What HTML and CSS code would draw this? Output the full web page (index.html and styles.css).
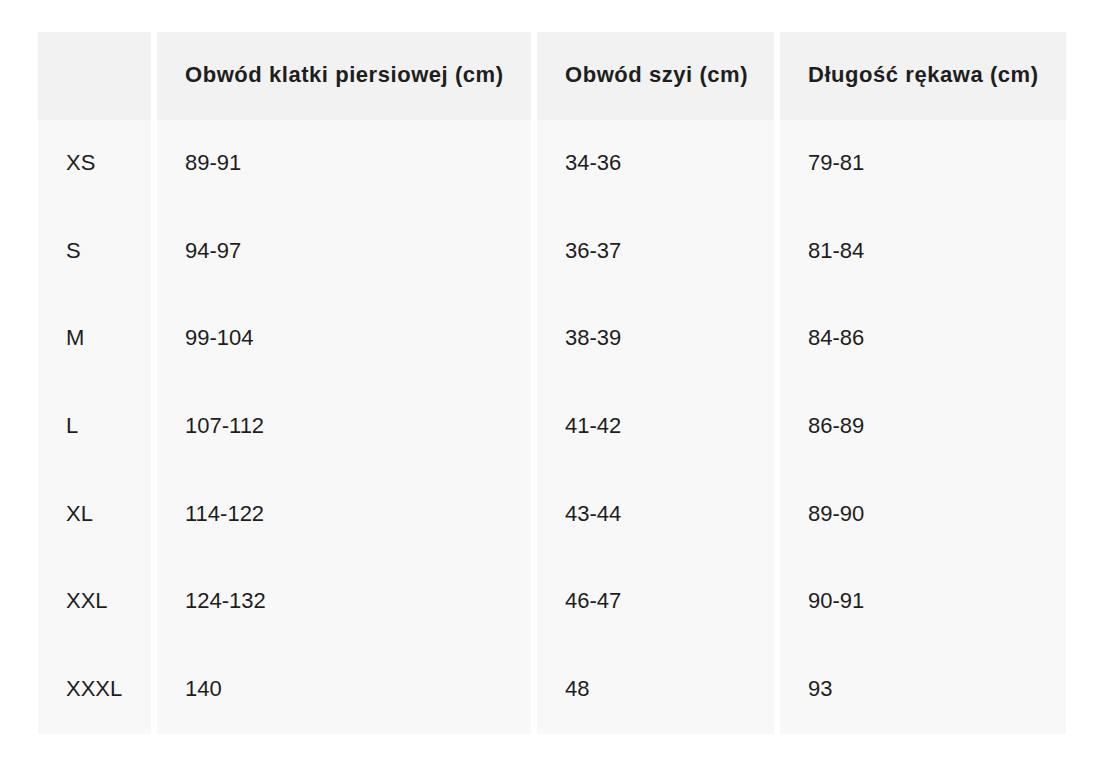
FILE: index.html
```html
<!DOCTYPE html>
<html lang="pl">
<head>
<meta charset="utf-8">
<title>Tabela rozmiarów</title>
<link rel="stylesheet" href="styles.css">
</head>
<body>
<div class="wrap">
<table class="sizes">
<colgroup>
<col class="c1"><col class="c2"><col class="c3"><col class="c4">
</colgroup>
<thead>
<tr><th></th><th>Obwód klatki piersiowej (cm)</th><th>Obwód szyi (cm)</th><th>Długość rękawa (cm)</th></tr>
</thead>
<tbody>
<tr><td>XS</td><td>89-91</td><td>34-36</td><td>79-81</td></tr>
<tr><td>S</td><td>94-97</td><td>36-37</td><td>81-84</td></tr>
<tr><td>M</td><td>99-104</td><td>38-39</td><td>84-86</td></tr>
<tr><td>L</td><td>107-112</td><td>41-42</td><td>86-89</td></tr>
<tr><td>XL</td><td>114-122</td><td>43-44</td><td>89-90</td></tr>
<tr><td>XXL</td><td>124-132</td><td>46-47</td><td>90-91</td></tr>
<tr><td>XXXL</td><td>140</td><td>48</td><td>93</td></tr>
</tbody>
</table>
</div>
</body>
</html>
```
FILE: styles.css
```css
html, body {
  margin: 0;
  padding: 0;
  background: #ffffff;
}
.wrap {
  padding: 32px 0 0 32px;
}
.sizes {
  border-collapse: separate;
  border-spacing: 6px 0;
  table-layout: fixed;
  width: 1040px;
  font-family: "Liberation Sans", Arial, sans-serif;
  color: #1e1e1e;
}
.c1 { width: 113px; }
.c2 { width: 374px; }
.c3 { width: 237px; }
.c4 { width: 286px; }
.sizes th,
.sizes td {
  text-align: left;
  padding: 0 0 0 28px;
  vertical-align: middle;
}
.sizes th {
  height: 88px;
  padding-bottom: 2px;
  box-sizing: border-box;
  background: #f2f2f2;
  font-weight: bold;
  font-size: 22px;
  letter-spacing: 0.55px;
}
.sizes td {
  height: 87.7px;
  padding-bottom: 2px;
  box-sizing: border-box;
  background: #f8f8f8;
  font-size: 22px;
}
```
